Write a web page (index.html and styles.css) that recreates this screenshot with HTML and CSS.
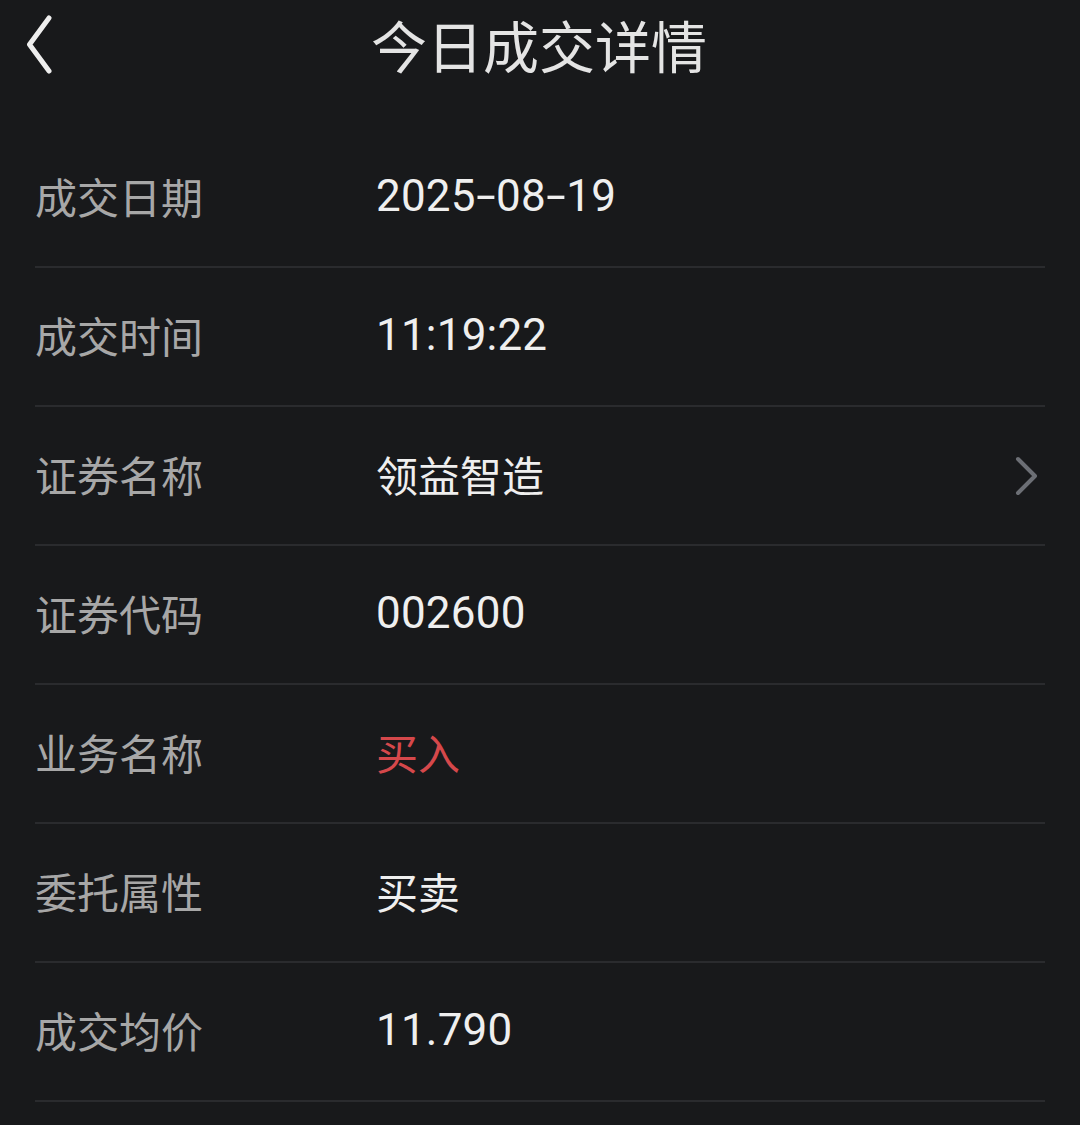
FILE: index.html
```html
<!DOCTYPE html>
<html lang="zh-CN">
<head>
<meta charset="utf-8">
<title>今日成交详情</title>
<link rel="stylesheet" href="styles.css">
</head>
<body>
<header class="topbar">
  <button class="back" aria-label="返回">
    <svg width="40" height="64" viewBox="0 0 40 64"><path d="M23 3 L3.5 29.5 L23 56" fill="none" stroke="#eeeeee" stroke-width="5" stroke-linecap="round" stroke-linejoin="round"/></svg>
  </button>
  <h1 class="title">今日成交详情</h1>
</header>
<main class="list">
  <div class="row"><span class="label">成交日期</span><span class="value num">2025<span class="dash">-</span>08<span class="dash">-</span>19</span></div>
  <div class="row"><span class="label">成交时间</span><span class="value num">11:19:22</span></div>
  <div class="row"><span class="label">证券名称</span><span class="value">领益智造</span>
    <svg class="chev" width="26" height="42" viewBox="0 0 26 42"><path d="M5 4 L22 21 L5 38" fill="none" stroke="#6c6f75" stroke-width="4" stroke-linecap="round" stroke-linejoin="round"/></svg>
  </div>
  <div class="row"><span class="label">证券代码</span><span class="value num">002600</span></div>
  <div class="row"><span class="label">业务名称</span><span class="value red">买入</span></div>
  <div class="row"><span class="label">委托属性</span><span class="value">买卖</span></div>
  <div class="row"><span class="label">成交均价</span><span class="value num">11.790</span></div>
</main>
</body>
</html>
```
FILE: styles.css
```css
html, body {
  margin: 0;
  padding: 0;
  background: #18191b;
}
body {
  width: 1080px;
  height: 1125px;
  overflow: hidden;
  font-family: "Noto Sans CJK SC", "Noto Sans", sans-serif;
}
.topbar {
  position: relative;
  height: 92px;
  display: flex;
  align-items: center;
  justify-content: center;
}
.back {
  position: absolute;
  left: 26px;
  top: 15px;
  padding: 0;
  margin: 0;
  border: 0;
  background: none;
  display: flex;
}
.title {
  margin: 0;
  font-size: 56px;
  font-weight: 400;
  color: #e4e4e4;
  line-height: 1;
  padding-bottom: 5px;
  padding-right: 2px;
}
.list {
  margin: 0 35px;
  padding-top: 37px;
}
.row {
  height: 137px;
  border-bottom: 2px solid #2a2b2e;
  display: flex;
  align-items: center;
  padding-right: 6px;
}
.label {
  width: 341px;
  flex: none;
  font-size: 42px;
  color: #a7a7a7;
  line-height: 1;
  padding-bottom: 3px;
}
.value {
  flex: 1;
  font-size: 42px;
  color: #efefef;
  line-height: 1;
  padding-bottom: 3px;
}
.value.num {
  font-family: Roboto, "Noto Sans", sans-serif;
  font-size: 44px;
  letter-spacing: 0.2px;
}
.dash {
  display: inline-block;
  transform: scaleX(1.6);
  margin: 0 4px;
}
.value.red {
  color: #d5484b;
}
.chev {
  flex: none;
}
```
